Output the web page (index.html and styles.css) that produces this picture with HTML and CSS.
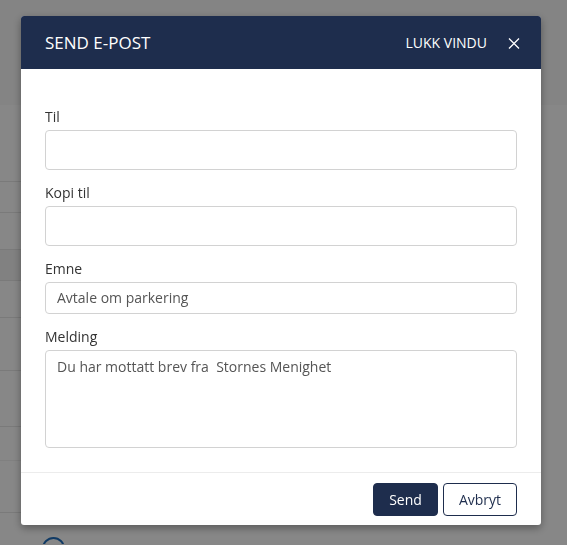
FILE: index.html
```html
<!DOCTYPE html>
<html lang="no">
<head>
<meta charset="utf-8">
<title>Send e-post</title>
<link rel="stylesheet" href="styles.css">
</head>
<body>
<div class="page">
  <div class="topband"></div>
  <div class="rows">
    <div class="row r1"></div>
    <div class="row r2"></div>
    <div class="row r3"></div>
    <div class="row r4 shade"></div>
    <div class="row r5"></div>
    <div class="row r6"></div>
    <div class="row r7"></div>
    <div class="row r8 soft"></div>
    <div class="row r9"></div>
    <div class="row last"><span class="circle"></span></div>
  </div>
</div>

<div class="overlay">
  <div class="modal">
    <div class="modal-header">
      <h2 class="modal-title">SEND E-POST</h2>
      <div class="close">
        <span class="close-text">LUKK VINDU</span>
        <svg class="close-icon" width="12" height="11" viewBox="0 0 12 11" aria-hidden="true">
          <path d="M1 0.5 L11 10.5 M11 0.5 L1 10.5" stroke="#ffffff" stroke-width="1.3" fill="none"/>
        </svg>
      </div>
    </div>
    <div class="modal-body">
      <div class="field">
        <label class="label">Til</label>
        <div class="input tall"></div>
      </div>
      <div class="field">
        <label class="label">Kopi til</label>
        <div class="input tall"></div>
      </div>
      <div class="field">
        <label class="label">Emne</label>
        <div class="input short">Avtale om parkering</div>
      </div>
      <div class="field">
        <label class="label">Melding</label>
        <div class="input area">Du har mottatt brev fra&nbsp; Stornes Menighet</div>
      </div>
    </div>
    <div class="modal-footer">
      <button class="btn btn-primary">Send</button>
      <button class="btn btn-outline">Avbryt</button>
    </div>
  </div>
</div>
</body>
</html>
```

FILE: styles.css
```css
* { box-sizing: border-box; }

html, body {
  margin: 0;
  padding: 0;
  height: 100%;
  overflow: hidden;
  font-family: "Open Sans", "Noto Sans", sans-serif;
  background: #ffffff;
}

.page {
  width: 567px;
}

.topband {
  height: 105px;
  background: #f9f9f9;
}

.rows {
  width: 520px;
}

.row {
  border-bottom: 1px solid #e6e6e6;
}
.r1 { height: 77px; }
.r2 { height: 31px; }
.r3 { height: 37px; }
.r4 { height: 31px; }
.r5 { height: 37px; }
.r6 { height: 53px; }
.r7 { height: 56px; }
.r8 { height: 34px; border-bottom-color: #f1f1f1; }
.r9 { height: 52px; }
.row.shade { background: #f4f4f4; }
.row.last {
  border-bottom: none;
  height: 31px;
  padding: 24px 0 0 42px;
  overflow: hidden;
}

.circle {
  display: block;
  width: 23px;
  height: 23px;
  border: 2px solid #1f6fbf;
  border-radius: 50%;
}

.overlay {
  position: fixed;
  inset: 0;
  background: rgba(0, 0, 0, 0.47);
  padding: 16px 0 0 21px;
}

.modal {
  width: 520px;
  background: #ffffff;
  border-radius: 3px;
  box-shadow: 0 3px 9px rgba(0, 0, 0, 0.35);
  overflow: hidden;
}

.modal-header {
  height: 53px;
  background: #1e2d4d;
  color: #ffffff;
  display: flex;
  align-items: center;
  justify-content: space-between;
  padding: 0 21px 0 24px;
}

.modal-title {
  margin: 0;
  font-size: 17px;
  font-weight: 400;
  letter-spacing: 0;
  line-height: 20px;
}

.close {
  display: flex;
  align-items: center;
  gap: 21px;
}

.close-text {
  font-size: 14px;
  font-weight: 500;
  line-height: 18px;
}

.close-icon {
  display: block;
  margin-top: 1px;
}

.modal-body {
  padding: 38px 24px 24px;
  display: flex;
  flex-direction: column;
  gap: 13px;
  border-bottom: 1px solid #ececec;
}

.field {
  display: flex;
  flex-direction: column;
  gap: 3px;
}

.label {
  font-size: 14px;
  line-height: 20px;
  color: #333333;
}

.input {
  border: 1px solid #d2d2d2;
  border-radius: 4px;
  font-size: 14px;
  color: #555555;
  padding: 0 11px;
  line-height: 20px;
}
.input.tall { height: 40px; }
.input.short {
  height: 32px;
  display: flex;
  align-items: center;
}
.input.area {
  height: 98px;
  padding-top: 6px;
}

.modal-footer {
  display: flex;
  justify-content: flex-end;
  gap: 5px;
  padding: 10px 24px 9px;
}

.btn {
  height: 33px;
  font-family: "Open Sans", "Noto Sans", sans-serif;
  font-size: 14px;
  border-radius: 4px;
  border: 1px solid #1e2d4d;
  cursor: pointer;
}

.btn-primary {
  background: #1e2d4d;
  color: #ffffff;
  width: 65px;
}

.btn-outline {
  background: #ffffff;
  color: #1e2d4d;
  width: 74px;
}
```
